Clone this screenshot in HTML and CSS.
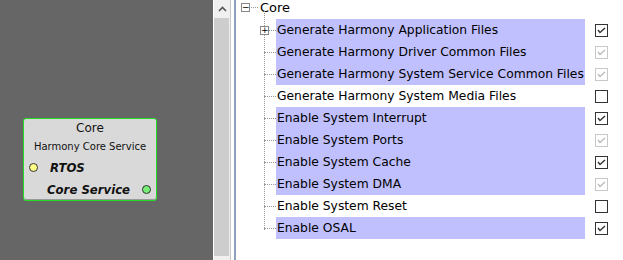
FILE: index.html
```html
<!DOCTYPE html>
<html lang="en">
<head>
    <meta charset="UTF-8">
    <meta name="viewport" content="width=device-width, initial-scale=1.0">
    <title>Core</title>
    <link rel="stylesheet" href="styles.css">
</head>
<body>
    <div class="canvas">
        <!-- component node -->
        <div class="node">
            <div class="node-title">Core</div>
            <div class="node-sub">Harmony Core Service</div>
            <div class="port port-in"><span class="dot dot-yellow"></span><span>RTOS</span></div>
            <div class="port port-out"><span>Core Service</span><span class="dot dot-green"></span></div>
        </div>
    </div>

    <div class="scrollbar">
        <div class="scroll-btn">
            <svg width="9" height="6" viewBox="0 0 9 6"><polyline points="1,5 4.5,1.5 8,5" fill="none" stroke="#555" stroke-width="1.6"/></svg>
        </div>
        <div class="scroll-thumb"></div>
    </div>

    <div class="splitter"></div>

    <div class="tree">
        <div class="tree-root">
            <span class="expander">−</span>
            <span class="root-stub"></span>
            <span class="root-label">Core</span>
        </div>
        <div class="tree-children">
            <div class="row">
                <span class="stub"><span class="expander expander-small">+</span></span>
                <span class="label on">Generate Harmony Application Files</span>
                <span class="check"><svg width="11" height="11"><polyline points="2,5 4,7.5 9,3" fill="none" stroke="#333" stroke-width="1.4"/></svg></span>
            </div>
            <div class="row">
                <span class="stub"></span>
                <span class="label on">Generate Harmony Driver Common Files</span>
                <span class="check disabled"><svg width="11" height="11"><polyline points="2,5 4,7.5 9,3" fill="none" stroke="#bbb" stroke-width="1.4"/></svg></span>
            </div>
            <div class="row">
                <span class="stub"></span>
                <span class="label on">Generate Harmony System Service Common Files</span>
                <span class="check disabled"><svg width="11" height="11"><polyline points="2,5 4,7.5 9,3" fill="none" stroke="#bbb" stroke-width="1.4"/></svg></span>
            </div>
            <div class="row">
                <span class="stub"></span>
                <span class="label">Generate Harmony System Media Files</span>
                <span class="check"></span>
            </div>
            <div class="row">
                <span class="stub"></span>
                <span class="label on">Enable System Interrupt</span>
                <span class="check"><svg width="11" height="11"><polyline points="2,5 4,7.5 9,3" fill="none" stroke="#333" stroke-width="1.4"/></svg></span>
            </div>
            <div class="row">
                <span class="stub"></span>
                <span class="label on">Enable System Ports</span>
                <span class="check disabled"><svg width="11" height="11"><polyline points="2,5 4,7.5 9,3" fill="none" stroke="#bbb" stroke-width="1.4"/></svg></span>
            </div>
            <div class="row">
                <span class="stub"></span>
                <span class="label on">Enable System Cache</span>
                <span class="check"><svg width="11" height="11"><polyline points="2,5 4,7.5 9,3" fill="none" stroke="#333" stroke-width="1.4"/></svg></span>
            </div>
            <div class="row">
                <span class="stub"></span>
                <span class="label on">Enable System DMA</span>
                <span class="check disabled"><svg width="11" height="11"><polyline points="2,5 4,7.5 9,3" fill="none" stroke="#bbb" stroke-width="1.4"/></svg></span>
            </div>
            <div class="row">
                <span class="stub"></span>
                <span class="label">Enable System Reset</span>
                <span class="check"></span>
            </div>
            <div class="row">
                <span class="stub"></span>
                <span class="label on">Enable OSAL</span>
                <span class="check"><svg width="11" height="11"><polyline points="2,5 4,7.5 9,3" fill="none" stroke="#333" stroke-width="1.4"/></svg></span>
            </div>
        </div>
    </div>
</body>
</html>
```

FILE: styles.css
```css
body {
    margin: 0;
    width: 623px;
    height: 260px;
    display: flex;
    overflow: hidden;
    font-family: "DejaVu Sans", sans-serif;
    background: #fff;
}

/* left: design canvas */
.canvas {
    position: relative;
    width: 213px;
    height: 260px;
    background: #666666;
    flex-shrink: 0;
}

.node {
    position: absolute;
    left: 23px;
    top: 118px;
    width: 132px;
    height: 81px;
    background: #d9d9d9;
    border: 1px solid #22dd22;
    border-radius: 3px;
    box-shadow: inset 0 -1px 0 #999;
    display: flex;
    flex-direction: column;
    color: #111;
    white-space: nowrap;
}

.node-title {
    text-align: center;
    font-size: 12px;
    height: 18px;
    line-height: 18px;
}

.node-sub {
    text-align: center;
    font-size: 10px;
    height: 19px;
    line-height: 19px;
}

.port {
    display: flex;
    align-items: center;
    height: 22px;
    font-family: "DejaVu Sans Condensed", "DejaVu Sans", sans-serif;
    font-size: 13px;
    font-weight: bold;
    font-style: italic;
}

.port-in {
    padding-left: 5px;
    gap: 12px;
}

.port-out {
    padding-left: 23px;
    gap: 12px;
}

.dot {
    width: 7px;
    height: 7px;
    border-radius: 50%;
    border: 1px solid #333;
    flex-shrink: 0;
}

.dot-yellow {
    background: #ffff88;
}

.dot-green {
    background: #77ee77;
}

/* vertical scrollbar */
.scrollbar {
    width: 16px;
    height: 260px;
    border-left: 1px solid #fff;
    background: #f0f0f0;
    flex-shrink: 0;
}

.scroll-btn {
    height: 18px;
    display: flex;
    align-items: center;
    justify-content: center;
}

.scroll-thumb {
    height: 238px;
    background: #cdcdcd;
    margin-right: 1px;
}

.splitter {
    width: 6px;
    height: 260px;
    flex-shrink: 0;
    border-left: 1px solid #c8c8c8;
    border-right: 2px solid #8ea2bc;
    background: #fff;
    box-sizing: border-box;
}

/* right: option tree */
.tree {
    flex: 1;
    padding-left: 5px;
    font-size: 12.3px;
    color: #000;
}

.tree-root {
    display: flex;
    align-items: center;
    height: 19px;
    margin-top: -2px;
}

.expander {
    width: 7px;
    height: 7px;
    border: 1px solid #888;
    background: #fff;
    font-size: 9px;
    line-height: 7px;
    text-align: center;
    color: #000;
    flex-shrink: 0;
}

.root-stub {
    width: 7px;
    border-top: 1px dotted #999;
    margin: 0 2px 0 1px;
}

.root-label {
    font-size: 13px;
}

.tree-children {
    position: relative;
    padding-top: 2px;
}

.tree-children::before {
    content: "";
    position: absolute;
    left: 23px;
    top: -6px;
    height: 219px;
    border-left: 1px dotted #999;
}

.row {
    display: flex;
    align-items: center;
    height: 22px;
}

.stub {
    position: relative;
    width: 12px;
    margin-left: 23px;
    border-top: 1px dotted #999;
}

.expander-small {
    position: absolute;
    left: -4px;
    top: -5px;
}

.label {
    width: 309px;
    height: 22px;
    line-height: 22px;
    white-space: nowrap;
    overflow: hidden;
    padding-left: 1px;
    box-sizing: border-box;
}

.label.on {
    background: #c0c0ff;
}

.check {
    width: 13px;
    height: 13px;
    margin-left: 10px;
    border: 1px solid #333;
    box-sizing: border-box;
    background: #fff;
    display: flex;
    align-items: center;
    justify-content: center;
}

.check.disabled {
    border-color: #c8c8c8;
}
```
